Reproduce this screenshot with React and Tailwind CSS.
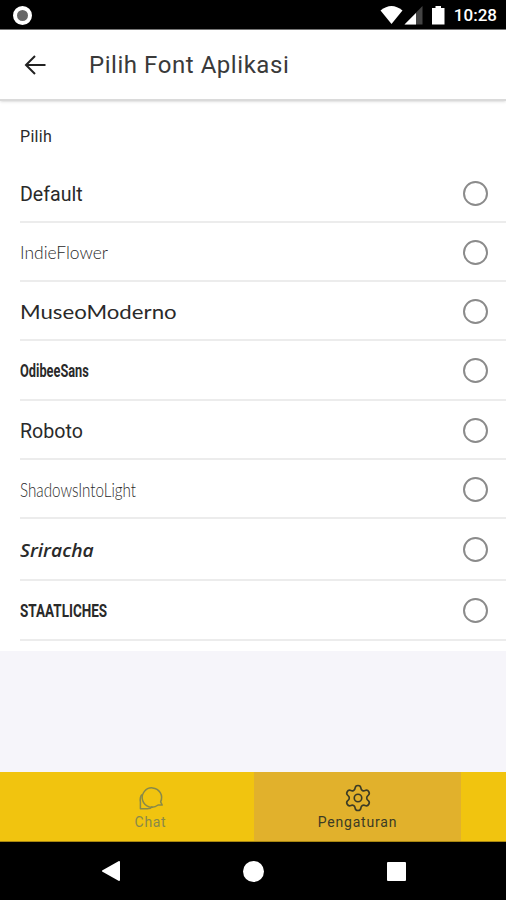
import React, { useState } from 'react';
import { Settings } from 'lucide-react';

const fonts = [
  { name: 'Default', row: 'h-[59px]', text: "text-[20px] pt-0.5 font-['Roboto',sans-serif] scale-x-[0.98]" },
  { name: 'IndieFlower', row: 'h-[59px]', text: "text-[18px] font-light font-['Lato',sans-serif] scale-x-[0.97]" },
  { name: 'MuseoModerno', row: 'h-[59px]', text: "text-[19px] font-['Lato',sans-serif] scale-x-[1.17]" },
  { name: 'OdibeeSans', row: 'h-[60px]', text: "text-[18px] font-bold font-['Roboto',sans-serif] scale-x-[0.71]" },
  { name: 'Roboto', row: 'h-[59px]', text: "text-[20px] pt-0.5 font-['Roboto',sans-serif] scale-x-[0.98]" },
  { name: 'ShadowsIntoLight', row: 'h-[59px]', text: "text-[19px] font-light font-['Lato',sans-serif] scale-x-[0.8]" },
  { name: 'Sriracha', row: 'h-[62px]', text: "text-[18px] font-semibold italic font-['Open_Sans',sans-serif] scale-x-[1.07]" },
  { name: 'STAATLICHES', row: 'h-[60px]', text: "text-[19px] font-bold font-['Roboto',sans-serif] scale-x-[0.71]" },
];

const ChatIcon = () => (
  <svg className="w-[26px] h-[26px]" viewBox="0 0 26 26" fill="none" stroke="currentColor" strokeWidth="1.5" strokeLinejoin="round">
    <path d="M24.2 20h-4.100a9.700 9.700 0 1 1 2.500-3.200z" />
    <path d="M4 9.500Q1.600 12 2.400 17v6.700h6.400q3.600 0.200 5.700-2.300" />
  </svg>
);

const App = () => {
  const [selected, setSelected] = useState(null);

  return (
    <div className="w-full h-[900px] flex flex-col bg-[#f6f5fa] text-[#2a2a2a] font-['Roboto',sans-serif] overflow-hidden">
      {/* Status bar */}
      <div className="h-[30px] shrink-0 bg-black border-b border-[#777] flex items-center justify-between pl-[13px] pr-[9px] pt-px text-white">
        <div className="w-[19px] h-[19px] rounded-full bg-[#666] border-4 border-white"></div>
        <div className="flex items-center">
          <svg className="w-[68px] h-[20px]" viewBox="0 0 68 20">
            <path d="M0.5 5.5Q11.5 -3.5 22.5 5.5L11.5 19z" fill="#fff" />
            <path d="M42.5 1v18.5H24.5z" fill="#444" />
            <path d="M36 8v11.5H24.5z" fill="#fff" />
            <path d="M52 3h3.500V1h5.500v2H64.500v16.500H52z" fill="#fff" />
          </svg>
          <span className="ml-[6px] text-[17px] leading-none font-medium">10:28</span>
        </div>
      </div>

      {/* Header */}
      <div className="h-[71px] shrink-0 bg-white border-b-2 border-[#dadada] shadow-sm flex items-center pl-[24px] z-10">
        <button type="button" className="w-[22px]">
          <svg className="w-[22px] h-[20px]" viewBox="0 0 22 20" fill="none" stroke="#222" strokeWidth="2">
            <path d="M21.500 10H2M11 1L2 10l9 9" />
          </svg>
        </button>
        <h1 className="ml-[43px] text-[24px] leading-none tracking-[0.55px] text-[#3a3a3a]">Pilih Font Aplikasi</h1>
      </div>

      {/* Font list */}
      <div className="bg-white pl-[20px] pb-[10px] shrink-0">
        <p className="h-[63px] flex items-center pt-[8px] text-[16px] tracking-[0.3px]">Pilih</p>
        {fonts.map((font) => (
          <button
            key={font.name}
            type="button"
            onClick={() => setSelected(font.name)}
            className={`w-full flex items-center justify-between pr-[18px] pt-px border-b-2 border-[#ececec] ${font.row}`}
          >
            <span className={`origin-left whitespace-nowrap leading-none ${font.text}`}>{font.name}</span>
            <span className="w-[25px] h-[25px] rounded-full border-2 border-[#8b8b8b] flex items-center justify-center">
              {selected === font.name && <span className="w-3 h-3 rounded-full bg-[#efc30f]"></span>}
            </span>
          </button>
        ))}
      </div>

      {/* Tabs */}
      <div className="mt-auto h-[70px] shrink-0 bg-[#f1c40f] border-b border-[#a88711] flex justify-center pl-[2px]">
        <button type="button" className="w-[207px] flex flex-col items-center pt-[13px] text-[#88894a]">
          <ChatIcon />
          <span className="mt-[4px] text-[14px] leading-none tracking-[0.7px]">Chat</span>
        </button>
        <button type="button" className="w-[207px] flex flex-col items-center pt-[13px] bg-[#e1b12c] text-[#3b3b25]">
          <Settings className="w-[30px] h-[30px] -my-[2px]" strokeWidth={1.3} />
          <span className="mt-[4px] text-[14px] leading-none tracking-[0.8px]">Pengaturan</span>
        </button>
      </div>

      {/* System navigation */}
      <div className="h-[58px] shrink-0 bg-black flex items-center justify-between pl-[101px] pr-[100px]">
        <svg className="w-[19px] h-[20px]" viewBox="0 0 19 20">
          <path d="M2 10L18 1v18z" fill="#fff" stroke="#fff" strokeWidth="2" strokeLinejoin="round" />
        </svg>
        <div className="w-[21px] h-[21px] rounded-full bg-white"></div>
        <div className="w-[19px] h-[19px] rounded-[1px] bg-white"></div>
      </div>
    </div>
  );
};

export default App;
